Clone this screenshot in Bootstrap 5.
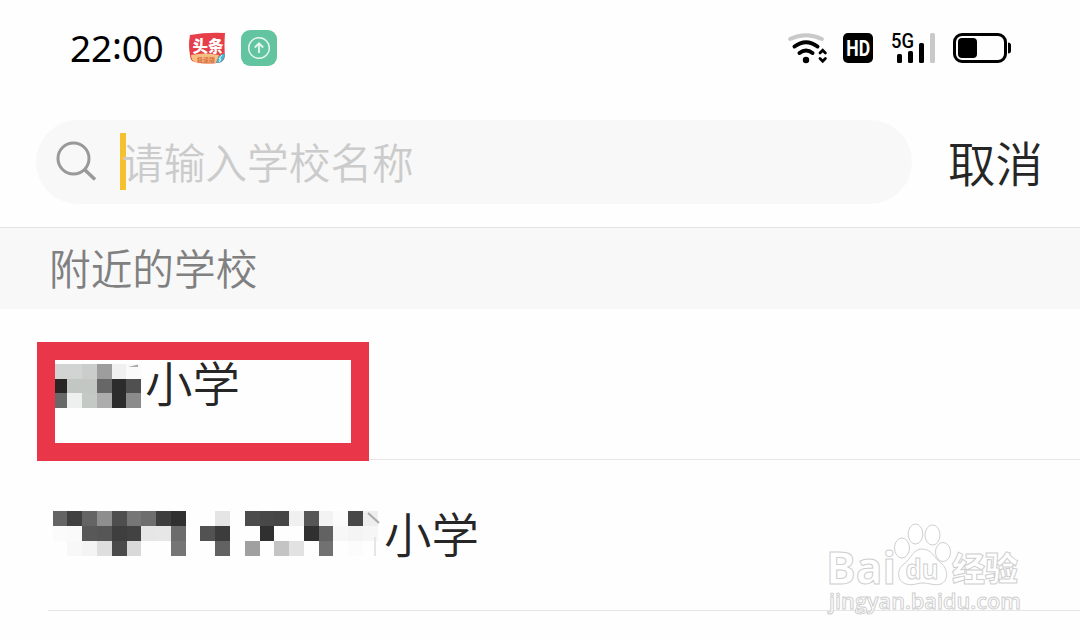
<!DOCTYPE html>
<html lang="zh-CN">
  <head>
    <meta charset="utf-8">
    <meta name="viewport" content="width=device-width, initial-scale=1">
    <title>选择学校</title>
    <link rel="stylesheet" href="https://cdn.jsdelivr.net/npm/bootstrap@5.3.0/dist/css/bootstrap.min.css">
    <style>
      body {
        font-family: "Noto Sans CJK SC", sans-serif;
        font-weight: 350;
        color: #262626;
        background: #fefefe;
        height: 639px;
      }
      svg { display: block; flex-shrink: 0; overflow: visible; }
      .status-bar { height: 96px; padding: 0 68px 0 70px; }
      .clock { font: 400 37px/1 "Noto Sans", sans-serif; color: #000; width: 118px; letter-spacing: -.2px; padding-bottom: 2px; }
      .clock span { display: inline-block; transform: translateY(-3px); }
      .hd-icon { margin-left: 15px; }
      .signal-icon { margin-left: 17px; }
      .battery-icon { margin-left: 16px; }
      .arrow-app { margin-left: 15px; }
      .search-row { height: 131px; padding: 24px 36px 23px; }
      .search-box { width: 876px; height: 84px; background: #f8f8f8; padding-left: 20px; }
      .search-box .form-control { font-size: 41.7px; line-height: 60px; font-weight: 350; margin: 0 0 2px 24px; }
      .search-box .form-control::placeholder { color: #cbcbcb; opacity: 1; }
      .caret-bar { left: 84px; top: 13px; width: 6px; height: 57px; background: #f5c12e; }
      .cancel-btn { font-size: 47.5px; line-height: 60px; margin-left: 36px; font-weight: 350; color: #262626; }
      .section-head { height: 82px; padding: 0 0 3px 49px; background: #f8f8f8; border-top: 1px solid #e4e4e4; font-size: 41.7px; color: #808080; }
      .school-row { height: 151px; margin-left: 48px; border-bottom: 1px solid #e6e6e6; font-size: 47.5px; line-height: 60px; }
      .school-row span { padding-bottom: 4px; }
      .picked { left: 37px; top: 342px; width: 332px; height: 119px; border: 18px solid #e93648; }
      .watermark { left: 820px; top: 515px; }
    </style>
    <script src="https://cdn.jsdelivr.net/npm/bootstrap@5.3.0/dist/js/bootstrap.bundle.min.js"></script>
  </head>
  <body class="position-relative overflow-hidden">
    <header class="status-bar d-flex align-items-center">
      <div class="clock">22<span>:</span>00</div>
      <svg width="38" height="34" viewBox="0 0 38 34">
        <path d="M2 4Q19 1 37 2Q36 15 37 25Q36 32 29 32Q18 34 7 31Q2 30 2 24Q0 14 2 4Z" fill="#e63f49"/>
        <path d="M3 24Q17 21 31 24L28 32Q18 34 7 31Q3 29 3 24Z" fill="#f7c083"/>
        <path d="M31 25L37 22Q37 32 28 32Z" fill="#3cb9d2"/>
        <path d="M34 24L31 28H33L31 31" stroke="#fff" fill="none"/>
        <text x="4.500" y="20.500" font-size="15.500" font-weight="900" fill="#fff">头条</text>
        <text x="9" y="30.500" font-size="6" font-weight="700" fill="#d96a3c">极速版</text>
      </svg>
      <svg class="arrow-app" width="36" height="36" viewBox="0 0 36 36">
        <rect width="36" height="36" rx="9" fill="#62c5a0"/>
        <g stroke="#e6f8f0" fill="none">
          <circle cx="18" cy="18" r="10.300" stroke-width="1.400"/>
          <path d="M18 23V13.500M13.800 17.500L18 13.300L22.200 17.500" stroke-width="1.800"/>
        </g>
      </svg>
      <div class="d-flex align-items-center ms-auto">
        <svg width="40" height="34" viewBox="788 31 40 34" fill="none" stroke-linecap="round">
          <path d="M790 39Q806 31.500 822 39" stroke="#c9c9c9" stroke-width="3.800"/>
          <g stroke="#000">
            <path d="M794.500 46.500Q806 38 817.500 46.500M799.500 53Q806 48 812.500 53" stroke-width="4"/>
            <path d="M820 53L822.700 50.300L825.400 53M820 58.500L822.700 61.200L825.400 58.500" stroke-width="2.800"/>
          </g>
          <circle cx="806" cy="60" r="3.200" fill="#000"/>
        </svg>
        <svg class="hd-icon" width="30" height="30" viewBox="0 0 30 30">
          <rect width="30" height="30" rx="5" fill="#000"/>
          <text x="3.300" y="22.800" font-family="Roboto" font-size="22" font-weight="700" fill="#fff" textLength="23.800" lengthAdjust="spacingAndGlyphs">HD</text>
        </svg>
        <svg class="signal-icon" width="46" height="34" viewBox="890 31 46 34">
          <text x="891" y="47.500" font-family="Roboto" font-size="20" font-weight="500" textLength="23" lengthAdjust="spacingAndGlyphs">5G</text>
          <rect x="897" y="54" width="5" height="9" rx="1.500"/>
          <rect x="908" y="51" width="5" height="12" rx="1.500"/>
          <rect x="919" y="43" width="5" height="20" rx="1.500"/>
          <rect x="930" y="33" width="5" height="30" rx="1.500" fill="#c9c9c9"/>
        </svg>
        <svg class="battery-icon" width="60" height="34" viewBox="952 31 60 34">
          <rect x="954.500" y="34.500" width="51" height="27" rx="7.500" fill="none" stroke="#000" stroke-width="3"/>
          <rect x="958" y="38" width="19" height="20" rx="4"/>
          <path d="M1008 42.500Q1011 43 1011 45V51Q1011 53 1008 53.500Z"/>
        </svg>
      </div>
    </header>

    <div class="search-row d-flex align-items-center">
      <div class="search-box rounded-pill d-flex align-items-center position-relative">
        <div class="caret-bar position-absolute"></div>
        <svg width="42" height="42" viewBox="0 0 42 42" fill="none" stroke="#999" stroke-width="3">
          <circle cx="17.500" cy="17.500" r="15.500"/>
          <path d="M28.500 28.500L39 38.500" stroke-width="3.500"/>
        </svg>
        <input type="text" class="form-control bg-transparent border-0 p-0 position-relative" placeholder="请输入学校名称">
      </div>
      <button type="button" class="cancel-btn btn p-0 border-0 text-nowrap">取消</button>
    </div>

    <div class="section-head d-flex align-items-center">附近的学校</div>

    <div class="school-row d-flex align-items-center">
      <svg width="97" height="60" viewBox="48 354 97 60" shape-rendering="crispEdges">
        <path d="M55 364H82V379H55Z" fill="#d1d4d2"/>
        <path d="M82 364H97V379H82Z" fill="#cbcdcc"/>
        <path d="M97 364H112V379H97Z" fill="#9d9d9d"/>
        <path d="M112 364H126V379H112Z" fill="#f0f0f0"/>
        <path d="M126 364H141V379H126Z" fill="#fafafa"/>
        <path d="M55 379H67V393H55Z" fill="#292525"/>
        <path d="M67 379H97V393H67Z" fill="#c2c7c4"/>
        <path d="M97 379H112V393H97Z" fill="#676767"/>
        <path d="M112 379H126V408H112Z" fill="#2d2c2c"/>
        <path d="M126 379H141V393H126Z" fill="#505050"/>
        <path d="M55 393H67V408H55Z" fill="#686868"/>
        <path d="M67 393H82V408H67Z" fill="#eef0ef"/>
        <path d="M82 393H97V408H82Z" fill="#c5c9c6"/>
        <path d="M97 393H112V408H97Z" fill="#adadad"/>
        <path d="M126 393H141V408H126Z" fill="#8b8b8b"/>
        <path d="M128 367L138 364.500V367Z" fill="#aaa" shape-rendering="auto"/>
      </svg>
      <span>小学</span>
    </div>

    <div class="school-row d-flex align-items-center">
      <svg id="mosaic" width="336" height="60" viewBox="48 505 336 60" shape-rendering="crispEdges">
        <path d="M368 513L379 523" stroke="#aaa" stroke-width="2" shape-rendering="auto"/>
        <path d="M374.500 537V556" stroke="#e6e6e6" stroke-width="2"/>
      </svg>
      <span>小学</span>
    </div>

    <div class="picked position-absolute"></div>

    <svg class="watermark position-absolute" width="220" height="110" viewBox="0 0 220 110" fill="#fff" stroke="#cfcfcf" stroke-width="1">
      <text x="6" y="69" font-family="Open Sans" font-size="44" font-weight="700" textLength="70" lengthAdjust="spacingAndGlyphs">Bai</text>
      <ellipse cx="82" cy="33" rx="7.500" ry="10"/>
      <ellipse cx="95.500" cy="19" rx="7.300" ry="10"/>
      <ellipse cx="112.500" cy="20" rx="7.500" ry="10"/>
      <ellipse cx="123" cy="37" rx="7.500" ry="9.500"/>
      <path d="M102 34C93 34 91 44 84 49C77 54 76 66 86 69C93 71 97 68 103 68C109 68 115 71 121 69C129 65 128 54 121 48C114 43 112 34 102 34Z"/>
      <text x="85.500" y="64" font-family="Open Sans" font-size="26" font-weight="700" textLength="33" lengthAdjust="spacingAndGlyphs">du</text>
      <text x="132" y="66" font-size="33" font-weight="900">经验</text>
      <text x="9" y="94" font-family="Open Sans" font-size="22" font-weight="600" textLength="192" lengthAdjust="spacingAndGlyphs">jingyan.baidu.com</text>
    </svg>

    <script>
      // blocks hiding the second school's name: [column, row, grey level]
      const blocks = [
        [0, 0, 100], [1, 0, 64], [2, 0, 100], [3, 0, 142], [4, 0, 78], [5, 0, 118], [6, 0, 110], [7, 0, 62], [8, 0, 48],
        [11, 0, 229], [13, 0, 76], [14, 0, 72], [15, 0, 70], [16, 0, 240], [17, 0, 86], [18, 0, 243], [19, 0, 251], [20, 0, 72], [21, 0, 238],
        [0, 1, 251], [1, 1, 250], [2, 1, 88], [3, 1, 86], [4, 1, 62], [5, 1, 66], [6, 1, 230], [7, 1, 231], [8, 1, 108],
        [10, 1, 82], [11, 1, 60], [14, 1, 48], [17, 1, 48], [18, 1, 98], [19, 1, 247], [20, 1, 244], [21, 1, 246],
        [1, 2, 248], [2, 2, 244], [3, 2, 222], [4, 2, 74], [5, 2, 217], [8, 2, 117],
        [11, 2, 98], [13, 2, 160], [15, 2, 196], [16, 2, 226], [18, 2, 113], [20, 2, 252]
      ];
      const edge = (n) => Math.round(52.6 + n * 14.78);
      document.querySelector('#mosaic').insertAdjacentHTML('afterbegin', blocks.map(([col, row, grey]) =>
        `<rect x="${edge(col)}" y="${511 + row * 15}" width="${edge(col + 1) - edge(col)}" height="15" fill="rgb(${grey},${grey},${grey})"/>`
      ).join(''));
    </script>
  </body>
</html>
